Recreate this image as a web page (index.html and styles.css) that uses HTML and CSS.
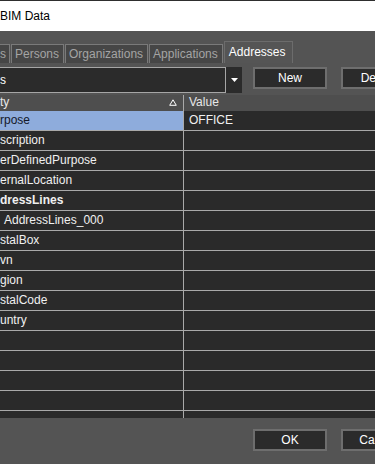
FILE: index.html
```html
<!DOCTYPE html>
<html lang="en">
<head>
  <meta charset="UTF-8">
  <title>BIM Data</title>
  <link rel="stylesheet" href="styles.css">
</head>
<body>
  <div class="titlebar">BIM Data</div>

  <div class="tabs">
    <div class="tab first">s</div>
    <div class="tab">Persons</div>
    <div class="tab">Organizations</div>
    <div class="tab">Applications</div>
    <div class="tab active">Addresses</div>
  </div>

  <div class="toolbar">
    <div class="combo">
      <div class="combo-text">s</div>
      <div class="combo-btn">
        <svg width="7" height="4" viewBox="0 0 7 4"><path d="M0 0 L7 0 L3.5 4 Z" fill="#fff"/></svg>
      </div>
    </div>
    <button class="btn new">New</button>
    <button class="btn side">Delete</button>
  </div>

  <div class="grid">
    <div class="grid-head">
      <div class="cell name">ty
        <svg class="sort" width="8" height="7" viewBox="0 0 8 7"><path d="M4 0.8 L7.3 6.3 L0.7 6.3 Z" fill="none" stroke="#fff" stroke-width="1"/></svg>
      </div>
      <div class="cell value">Value</div>
    </div>
    <div class="row selected"><div class="cell name">rpose</div><div class="cell value">OFFICE</div></div>
    <div class="row"><div class="cell name">scription</div><div class="cell value"></div></div>
    <div class="row"><div class="cell name">erDefinedPurpose</div><div class="cell value"></div></div>
    <div class="row"><div class="cell name">ernalLocation</div><div class="cell value"></div></div>
    <div class="row"><div class="cell name bold">dressLines</div><div class="cell value"></div></div>
    <div class="row"><div class="cell name sub">AddressLines_000</div><div class="cell value"></div></div>
    <div class="row"><div class="cell name">stalBox</div><div class="cell value"></div></div>
    <div class="row"><div class="cell name">vn</div><div class="cell value"></div></div>
    <div class="row"><div class="cell name">gion</div><div class="cell value"></div></div>
    <div class="row"><div class="cell name">stalCode</div><div class="cell value"></div></div>
    <div class="row"><div class="cell name">untry</div><div class="cell value"></div></div>
    <div class="row"><div class="cell name"></div><div class="cell value"></div></div>
    <div class="row"><div class="cell name"></div><div class="cell value"></div></div>
    <div class="row"><div class="cell name"></div><div class="cell value"></div></div>
    <div class="row"><div class="cell name"></div><div class="cell value"></div></div>
    <div class="row"><div class="cell name"></div><div class="cell value"></div></div>
  </div>

  <div class="footer">
    <button class="btn ok">OK</button>
    <button class="btn side">Cancel</button>
  </div>
</body>
</html>
```

FILE: styles.css
```css
body {
  margin: 0;
  width: 375px;
  height: 464px;
  overflow: hidden;
  background: #545454;
  font-family: "Liberation Sans", Arial, sans-serif;
  font-size: 12px;
  color: #fff;
}
.titlebar {
  height: 30px;
  line-height: 30px;
  border-top: 1px solid #2e2e2e;
  background: #fff;
  color: #000;
  white-space: nowrap;
}
.tabs {
  display: flex;
  align-items: flex-end;
  height: 22px;
  margin-top: 10px;
}
.tab {
  flex: none;
  height: 19px;
  line-height: 19px;
  box-sizing: border-box;
  padding: 0 4px 0 3px;
  margin-right: 1px;
  border: 1px solid #7a7a7a;
  border-bottom: none;
  background: #464646;
  color: #a4a4a4;
  white-space: nowrap;
}
.tab.first {
  padding: 0 3px 0 0;
  border-left: none;
}
.tab.active {
  height: 22px;
  line-height: 21px;
  background: #555;
  color: #fff;
  border-color: #6c6c6c;
  padding: 0 6px 0 4px;
}
.toolbar {
  display: flex;
  align-items: flex-start;
  height: 26px;
  margin-top: 4px;
  overflow: hidden;
}
.combo {
  flex: none;
  display: flex;
  width: 242px;
  height: 26px;
}
.combo-text {
  flex: 1;
  box-sizing: border-box;
  border: 1px solid #a6a6a6;
  border-left: none;
  background: #2b2b2b;
  line-height: 24px;
}
.combo-btn {
  flex: none;
  width: 16px;
  background: #2b2b2b;
  display: flex;
  align-items: center;
  justify-content: center;
}
.btn {
  flex: none;
  box-sizing: border-box;
  width: 74px;
  height: 22px;
  border: 2px solid #6e6e6e;
  background: #2b2b2b;
  color: #fff;
  font-family: inherit;
  font-size: 12px;
  padding: 0;
}
.btn.new {
  margin-left: 11px;
}
.btn.side {
  margin-left: 14px;
}
.grid {
  height: 323px;
  margin-top: 2px;
  background: #2a2a2a;
  overflow: hidden;
}
.grid-head {
  display: flex;
  height: 16px;
  line-height: 15px;
  background: #4e4e4e;
  color: #e8e8e8;
}
.grid-head .value {
  border-left: 1px solid #3a3a3a;
}
.row {
  display: flex;
  height: 19px;
  line-height: 19px;
  border-bottom: 1px solid #a9a9a9;
  color: #f0f0f0;
}
.cell {
  box-sizing: border-box;
  white-space: nowrap;
  overflow: hidden;
}
.cell.name {
  position: relative;
  width: 183px;
  flex: none;
}
.cell.value {
  flex: 1;
  padding-left: 5px;
  border-left: 1px solid #a9a9a9;
}
.sort {
  position: absolute;
  left: 169px;
  top: 4px;
}
.row.selected .name {
  background: #8eacdc;
  color: #15192a;
}
.bold {
  font-weight: bold;
}
.sub {
  padding-left: 4px;
}
.footer {
  display: flex;
  padding-top: 11px;
  padding-left: 253px;
  overflow: hidden;
}
```
